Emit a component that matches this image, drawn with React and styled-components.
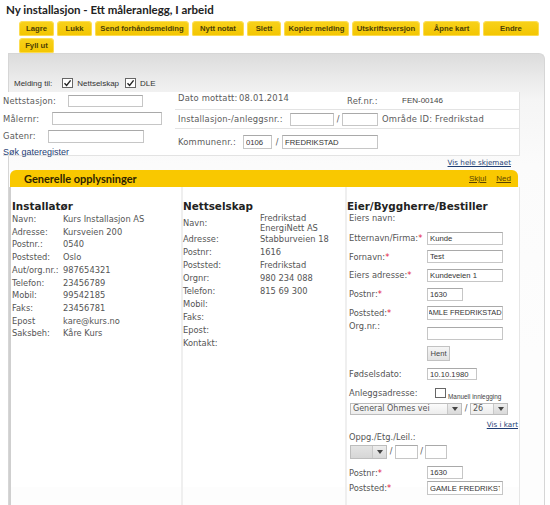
import React, { useLayoutEffect, useRef } from "react";
import styled, { createGlobalStyle } from "styled-components";

const GlobalStyle = createGlobalStyle`
  html, body { margin: 0; padding: 0; background: #fff; }
  body { font-family: "DejaVu Sans", Verdana, sans-serif; color: #555; }
  * { box-sizing: border-box; }
`;

const Page = styled.div`
  width: 550px;
  height: 505px;
  overflow: hidden;
`;

const Title = styled.h1`
  margin: 0;
  padding: 4px 0 0 6px;
  font: 700 11.5px/12px Lato, "DejaVu Sans", sans-serif;
  color: #222;
`;

const Toolbar = styled.div`
  display: flex;
  flex-wrap: wrap;
  gap: 2px 3px;
  width: 522px;
  margin: 5px 0 0 19px;
`;

const TabButton = styled.button`
  width: ${(p) => p.$w}px;
  height: 15px;
  padding: 0;
  border: none;
  border-radius: 4px 4px 2px 2px;
  background: linear-gradient(#f8d21c, #f3c500);
  box-shadow: inset 0 0 0 1px rgba(255, 228, 110, 0.7);
  font: 700 7.7px "Liberation Sans", Arial, sans-serif;
  color: #4d3f05;
  white-space: nowrap;
`;

const Panel = styled.div`
  margin: 0 5px 0 8px;
  height: 452px;
  border: 1px solid #d6d6d6;
  border-bottom: none;
  border-radius: 0 6px 0 0;
  background: linear-gradient(#dcdcdc 0px, #e9e9e9 22px, #f5f5f5 45px, #fbfbfb 110px, #fdfdfd 300px);
  padding: 22px 24px 0 0;
`;

const RecipientRow = styled.div`
  display: flex;
  align-items: center;
  height: 14px;
  padding-left: 5px;
  font: 8px "Liberation Sans", Arial, sans-serif;
  color: #333;
`;

const Spaced = styled.span`
  margin-left: ${(p) => p.$ml || 0}px;
  white-space: nowrap;
`;

const Box = styled.span`
  flex: none;
  display: inline-flex;
  align-items: center;
  justify-content: center;
  width: 11px;
  height: 10px;
  margin-left: ${(p) => p.$ml || 0}px;
  border: 1px solid #666;
  background: #fff;
`;

const CheckBox = ({ checked, ml }) => (
  <Box $ml={ml}>
    {checked && (
      <svg width="9" height="8" viewBox="0 0 9 8">
        <path d="M1.5 4.2 L3.6 6.4 L7.6 1.4" fill="none" stroke="#222" strokeWidth="1.4" />
      </svg>
    )}
  </Box>
);

const HeadForm = styled.div`
  display: grid;
  grid-template-columns: 172px 345px;
  width: 517px;
  margin: 2px 0 0 -6px;
  background: #fff;
  border-bottom: 1px solid #e3e3e3;
`;

const HeadLeft = styled.div``;

const HeadRight = styled.div`
  border-right: 1px solid #e3e3e3;
`;

const LeftRow = styled.div`
  display: flex;
  align-items: center;
  height: ${(p) => p.$h}px;
`;

const RightRow = styled.div`
  display: flex;
  align-items: ${(p) => p.$align || "center"};
  height: ${(p) => p.$h}px;
  padding-left: 3px;
  border-bottom: ${(p) => (p.$last ? "none" : "1px solid #e3e3e3")};
`;

const FormLabel = styled.span`
  flex: none;
  width: ${(p) => (p.$w ? `${p.$w}px` : "auto")};
  margin-top: ${(p) => p.$mt || 0}px;
  margin-left: ${(p) => p.$ml || 0}px;
  font-size: 8.4px;
  letter-spacing: 0.2px;
  color: #5a5a5a;
  white-space: nowrap;
`;

const ArialText = styled.span`
  flex: none;
  margin-top: ${(p) => p.$mt || 0}px;
  font: 8px "Liberation Sans", Arial, sans-serif;
  color: #444;
  white-space: nowrap;
`;

const Slash = styled.span`
  flex: none;
  width: ${(p) => p.$w}px;
  text-align: center;
  font-size: 8px;
  color: #555;
`;

const TextInput = styled.input`
  flex: none;
  width: ${(p) => p.$w}px;
  height: ${(p) => p.$h || 13}px;
  margin: ${(p) => p.$m || 0};
  padding: ${(p) => (p.$tight ? "0 0 0 1px" : "0 2px")};
  border: 1px solid #c6c6c6;
  border-top-color: #a9a9a9;
  background: #fff;
  font: ${(p) => (p.$tight ? "7.4px" : "7.7px")} "Liberation Sans", Arial, sans-serif;
  color: #333;
  outline: none;
`;

const EndInput = (props) => {
  const ref = useRef(null);
  useLayoutEffect(() => {
    if (ref.current) ref.current.scrollLeft = ref.current.scrollWidth;
  }, []);
  return <TextInput ref={ref} $tight {...props} />;
};

const Link = styled.a`
  font: ${(p) => (p.$arial ? `9px "Liberation Sans", Arial, sans-serif` : `7.2px "DejaVu Sans", Verdana, sans-serif`)};
  color: #1e3d73;
  text-decoration: ${(p) => (p.$plain ? "none" : "underline")};
  white-space: nowrap;
  cursor: pointer;
`;

const SearchLine = styled.div`
  height: 10px;
  line-height: 10px;
`;

const LinkRow = styled.div`
  display: flex;
  justify-content: flex-end;
  align-items: center;
  height: 13px;
  padding-right: 9px;
`;

const Section = styled.section`
  margin-top: 1px;
`;

const SectionBar = styled.div`
  display: flex;
  align-items: center;
  justify-content: space-between;
  height: 17px;
  margin: 0 2px 0 1px;
  padding: 0 7px 0 14px;
  border-radius: 6px 6px 0 0;
  background: #f9c800;
`;

const BarTitle = styled.h2`
  margin: 0;
  font: 700 11px/12px Lato, "DejaVu Sans", sans-serif;
  color: #2e2400;
`;

const BarLinks = styled.div`
  display: flex;
  gap: 10px;
  font: 8px "Liberation Sans", Arial, sans-serif;
`;

const BarLink = styled.a`
  color: #5a4300;
  text-decoration: underline;
  cursor: pointer;
`;

const Columns = styled.div`
  display: grid;
  grid-template-columns: 172px 164px 175px;
  height: 300px;
  background: #fff;
`;

const Column = styled.div`
  border-left: 2px solid ${(p) => (p.$first ? "#cfcfcf" : "#efefef")};
  border-right: ${(p) => (p.$last ? "1px solid #e6e6e6" : "none")};
  padding-left: ${(p) => p.$pl || 0}px;
`;

const Heading = styled.h3`
  margin: 0;
  padding-top: 12px;
  font: 700 10.4px/14px "DejaVu Sans", Verdana, sans-serif;
  color: #222;
  white-space: nowrap;
`;

const InfoRow = styled.div`
  display: flex;
  align-items: center;
  min-height: ${(p) => p.$h}px;
  font-size: 8.3px;
  line-height: ${(p) => p.$h}px;
  color: #555;
  white-space: nowrap;
`;

const InfoLabel = styled.span`
  flex: none;
  width: ${(p) => p.$w}px;
`;

const MultiValue = styled.span`
  line-height: 10px;
`;

const Req = styled.span`
  color: #e2203f;
`;

const PlainLine = styled.div`
  height: ${(p) => p.$h}px;
  line-height: ${(p) => p.$h}px;
  margin-top: ${(p) => p.$mt || 0}px;
  padding-left: 2px;
  font-size: 8.3px;
  color: #555;
  white-space: nowrap;
`;

const OwnerRow = styled.div`
  display: flex;
  align-items: ${(p) => p.$align || "center"};
  justify-content: ${(p) => p.$justify || "flex-start"};
  height: ${(p) => p.$h}px;
  margin-top: ${(p) => p.$mt || 0}px;
  padding-left: ${(p) => (p.$pl === undefined ? 2 : p.$pl)}px;
  padding-right: ${(p) => p.$pr || 0}px;
`;

const OwnerLabel = styled.span`
  flex: none;
  width: ${(p) => p.$w || 78}px;
  font-size: 8.3px;
  line-height: ${(p) => p.$lh || 10}px;
  color: #555;
  white-space: nowrap;
`;

const SmallNote = styled.span`
  align-self: flex-end;
  margin: 0 0 1px 2px;
  font: 6.4px "Liberation Sans", Arial, sans-serif;
  color: #444;
  white-space: nowrap;
`;

const FetchButton = styled.button`
  width: 23px;
  height: 15px;
  margin: 2px 0 0 80px;
  padding: 0;
  border: 1px solid #c2c2c2;
  background: linear-gradient(#f6f6f6, #e2e2e2);
  font: 7.6px "Liberation Sans", Arial, sans-serif;
  color: #444;
`;

const SelectBox = styled.span`
  flex: none;
  display: flex;
  width: ${(p) => p.$w}px;
  height: ${(p) => p.$h || 12}px;
  border: 1px solid #bdbdbd;
  background: ${(p) => (p.$dim ? "linear-gradient(#e4e4e4, #d6d6d6)" : "linear-gradient(#fbfbfb, #ececec)")};
`;

const SelectText = styled.span`
  flex: 1;
  padding-left: 2px;
  font-size: 8px;
  line-height: 10px;
  color: #555;
  overflow: hidden;
  white-space: nowrap;
`;

const SelectArrow = styled.span`
  flex: none;
  display: flex;
  align-items: center;
  justify-content: center;
  width: 14px;
  border-left: 1px solid #c8c8c8;
  background: linear-gradient(#eeeeee, #d9d9d9);
`;

const Select = ({ w, h, dim, text }) => (
  <SelectBox $w={w} $h={h} $dim={dim}>
    <SelectText>{text}</SelectText>
    <SelectArrow>
      <svg width="6" height="4" viewBox="0 0 6 4">
        <path d="M0 0 H6 L3 4 Z" fill="#444" />
      </svg>
    </SelectArrow>
  </SelectBox>
);

const buttons = [
  ["Lagre", 35],
  ["Lukk", 35],
  ["Send forhåndsmelding", 94],
  ["Nytt notat", 52],
  ["Slett", 34],
  ["Kopier melding", 65],
  ["Utskriftsversjon", 68],
  ["Åpne kart", 57],
  ["Endre", 56],
  ["Fyll ut", 35],
];

const installer = [
  ["Navn:", "Kurs Installasjon AS"],
  ["Adresse:", "Kursveien 200"],
  ["Postnr.:", "0540"],
  ["Poststed:", "Oslo"],
  ["Aut/org.nr.:", "987654321"],
  ["Telefon:", "23456789"],
  ["Mobil:", "99542185"],
  ["Faks:", "23456781"],
  ["Epost", "kare@kurs.no"],
  ["Saksbeh:", "Kåre Kurs"],
];

const grid = [
  ["Adresse:", "Stabburveien 18"],
  ["Postnr:", "1616"],
  ["Poststed:", "Fredrikstad"],
  ["Orgnr:", "980 234 088"],
  ["Telefon:", "815 69 300"],
  ["Mobil:", ""],
  ["Faks:", ""],
  ["Epost:", ""],
  ["Kontakt:", ""],
];

const owner = [
  ["Etternavn/Firma:", "Kunde", 76],
  ["Fornavn:", "Test", 76],
  ["Eiers adresse:", "Kundeveien 1", 76],
  ["Postnr:", "1630", 36],
  ["Poststed:", "GAMLE FREDRIKSTAD", 76, true],
];

export default function App() {
  return (
    <Page>
      <GlobalStyle />
      <Title>Ny installasjon - Ett måleranlegg, I arbeid</Title>
      <Toolbar>
        {buttons.map(([label, w]) => (
          <TabButton key={label} $w={w}>
            {label}
          </TabButton>
        ))}
      </Toolbar>

      <Panel>
        <RecipientRow>
          <span>Melding til:</span>
          <CheckBox checked ml={10} />
          <Spaced $ml={4}>Nettselskap</Spaced>
          <CheckBox checked ml={6} />
          <Spaced $ml={4}>DLE</Spaced>
        </RecipientRow>

        <HeadForm>
          <HeadLeft>
            <LeftRow $h={18}>
              <FormLabel $w={65}>Nettstasjon:</FormLabel>
              <TextInput $w={75} $h={12} readOnly value="" />
            </LeftRow>
            <LeftRow $h={17}>
              <FormLabel $w={49}>Målernr:</FormLabel>
              <TextInput $w={110} readOnly value="" />
            </LeftRow>
            <LeftRow $h={18}>
              <FormLabel $w={45}>Gatenr:</FormLabel>
              <TextInput $w={96} readOnly value="" />
            </LeftRow>
            <SearchLine>
              <Link $arial $plain>Søk gateregister</Link>
            </SearchLine>
          </HeadLeft>

          <HeadRight>
            <RightRow $h={18} $align="flex-start">
              <FormLabel $w={61} $mt={1}>Dato mottatt:</FormLabel>
              <FormLabel $w={108} $mt={1}>08.01.2014</FormLabel>
              <FormLabel $w={55} $mt={4}>Ref.nr.:</FormLabel>
              <ArialText $mt={4}>FEN-00146</ArialText>
            </RightRow>
            <RightRow $h={19}>
              <FormLabel $w={112}>Installasjon-/anleggsnr.:</FormLabel>
              <TextInput $w={44} readOnly value="" />
              <Slash $w={8}>/</Slash>
              <TextInput $w={36} readOnly value="" />
              <FormLabel $ml={4}>Område ID: Fredrikstad</FormLabel>
            </RightRow>
            <RightRow $h={26} $last>
              <FormLabel $w={65}>Kommunenr.:</FormLabel>
              <TextInput $w={29} $h={14} readOnly value="0106" />
              <Slash $w={10}>/</Slash>
              <TextInput $w={96} $h={14} readOnly value="FREDRIKSTAD" />
            </RightRow>
          </HeadRight>
        </HeadForm>

        <LinkRow>
          <Link>Vis hele skjemaet</Link>
        </LinkRow>

        <Section>
          <SectionBar>
            <BarTitle>Generelle opplysninger</BarTitle>
            <BarLinks>
              <BarLink>Skjul</BarLink>
              <BarLink>Ned</BarLink>
            </BarLinks>
          </SectionBar>

          <Columns>
            <Column $first $pl={1}>
              <Heading>Installatør</Heading>
              {installer.map(([l, v]) => (
                <InfoRow key={l} $h={12.7}>
                  <InfoLabel $w={51}>{l}</InfoLabel>
                  <span>{v}</span>
                </InfoRow>
              ))}
            </Column>

            <Column>
              <Heading>Nettselskap</Heading>
              <InfoRow $h={20}>
                <InfoLabel $w={77}>Navn:</InfoLabel>
                <MultiValue>
                  Fredrikstad
                  <br />
                  EnergiNett AS
                </MultiValue>
              </InfoRow>
              {grid.map(([l, v]) => (
                <InfoRow key={l} $h={13}>
                  <InfoLabel $w={77}>{l}</InfoLabel>
                  <span>{v}</span>
                </InfoRow>
              ))}
            </Column>

            <Column $last>
              <Heading>Eier/Byggherre/Bestiller</Heading>
              <PlainLine $h={11}>Eiers navn:</PlainLine>
              <OwnerRow $h={5} />
              {owner.map(([l, v, w, end]) => (
                <OwnerRow key={l} $h={18.6}>
                  <OwnerLabel>
                    {l}
                    <Req>*</Req>
                  </OwnerLabel>
                  {end ? (
                    <EndInput $w={w} $h={14} readOnly value={v} />
                  ) : (
                    <TextInput $w={w} readOnly value={v} />
                  )}
                </OwnerRow>
              ))}
              <OwnerRow $h={19} $align="flex-start">
                <OwnerLabel $lh={8}>Org.nr.:</OwnerLabel>
                <TextInput $w={76} $m="5px 0 0 0" readOnly value="" />
              </OwnerRow>
              <FetchButton>Hent</FetchButton>
              <OwnerRow $h={17} $mt={5}>
                <OwnerLabel>Fødselsdato:</OwnerLabel>
                <TextInput $w={50} $h={12} readOnly value="10.10.1980" />
              </OwnerRow>
              <OwnerRow $h={16} $mt={2}>
                <OwnerLabel $w={86}>Anleggsadresse:</OwnerLabel>
                <CheckBox />
                <SmallNote>Manuell innlegging</SmallNote>
              </OwnerRow>
              <OwnerRow $h={12} $mt={2} $pl={3}>
                <Select w={112} text="General Ohmes vei" />
                <Slash $w={8}>/</Slash>
                <Select w={38} text="26" />
              </OwnerRow>
              <OwnerRow $h={12} $mt={4} $justify="flex-end" $pr={1}>
                <Link>Vis i kart</Link>
              </OwnerRow>
              <PlainLine $h={10} $mt={1}>Oppg./Etg./Leil.:</PlainLine>
              <OwnerRow $h={14} $mt={3} $pl={3}>
                <Select w={37} h={14} dim text="" />
                <Slash $w={8}>/</Slash>
                <TextInput $w={23} $h={14} readOnly value="" />
                <Slash $w={7}>/</Slash>
                <TextInput $w={22} $h={14} readOnly value="" />
              </OwnerRow>
              <OwnerRow $h={15.5} $mt={6}>
                <OwnerLabel>
                  Postnr:<Req>*</Req>
                </OwnerLabel>
                <TextInput $w={36} readOnly value="1630" />
              </OwnerRow>
              <OwnerRow $h={15.5}>
                <OwnerLabel>
                  Poststed:<Req>*</Req>
                </OwnerLabel>
                <TextInput $w={76} $h={14} readOnly value="GAMLE FREDRIKSTAD" />
              </OwnerRow>
              <OwnerRow $h={14} $mt={9} $align="flex-start">
                <OwnerLabel />
                <TextInput $w={50} $h={14} readOnly value="" />
              </OwnerRow>
            </Column>
          </Columns>
        </Section>
      </Panel>
    </Page>
  );
}
